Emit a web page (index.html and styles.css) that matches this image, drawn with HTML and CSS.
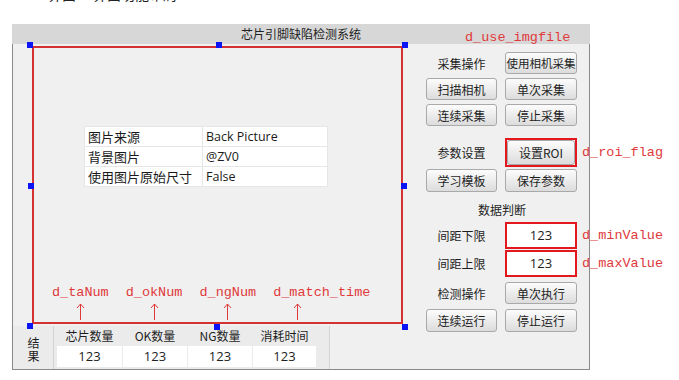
FILE: index.html
```html
<!DOCTYPE html>
<html lang="zh-CN">
<head>
    <meta charset="UTF-8">
    <title>芯片引脚缺陷检测系统</title>
    <link rel="stylesheet" href="styles.css">
</head>
<body>
    <div class="cut"><div class="cut-inner"><span>界面</span><span>界面功能布局</span></div></div>

    <div class="window">
        <div class="titlebar">芯片引脚缺陷检测系统</div>
        <span class="note note-top">d_use_imgfile</span>

        <div class="body">
            <!-- picture area -->
            <div class="canvas">
                <div class="roi">
                    <i class="handle h-tl"></i>
                    <i class="handle h-tm"></i>
                    <i class="handle h-tr"></i>
                    <i class="handle h-ml"></i>
                    <i class="handle h-mr"></i>
                    <i class="handle h-bl"></i>
                    <i class="handle h-bm"></i>
                    <i class="handle h-br"></i>

                    <table class="props">
                        <tr><td>图片来源</td><td>Back Picture</td></tr>
                        <tr><td>背景图片</td><td>@ZV0</td></tr>
                        <tr><td>使用图片原始尺寸</td><td>False</td></tr>
                    </table>

                    <div class="notes">
                        <div class="tag">
                            <span class="note">d_taNum</span>
                            <svg width="9" height="17" viewBox="0 0 9 17"><path d="M4.5 1V17M1 5L4.5 1L8 5"/></svg>
                        </div>
                        <div class="tag">
                            <span class="note">d_okNum</span>
                            <svg width="9" height="17" viewBox="0 0 9 17"><path d="M4.5 1V17M1 5L4.5 1L8 5"/></svg>
                        </div>
                        <div class="tag">
                            <span class="note">d_ngNum</span>
                            <svg width="9" height="17" viewBox="0 0 9 17"><path d="M4.5 1V17M1 5L4.5 1L8 5"/></svg>
                        </div>
                        <div class="tag">
                            <span class="note">d_match_time</span>
                            <svg class="shift" width="9" height="17" viewBox="0 0 9 17"><path d="M4.5 1V17M1 5L4.5 1L8 5"/></svg>
                        </div>
                    </div>
                </div>
            </div>

            <!-- control panel -->
            <div class="panel">
                <div class="row r1">
                    <span class="label">采集操作</span>
                    <button class="btn">使用相机采集</button>
                </div>
                <div class="row r2">
                    <button class="btn">扫描相机</button>
                    <button class="btn">单次采集</button>
                </div>
                <div class="row r3">
                    <button class="btn">连续采集</button>
                    <button class="btn">停止采集</button>
                </div>
                <div class="row r4">
                    <span class="label">参数设置</span>
                    <div class="frame"><button class="btn tall">设置ROI</button></div>
                    <span class="note">d_roi_flag</span>
                </div>
                <div class="row r5">
                    <button class="btn">学习模板</button>
                    <button class="btn">保存参数</button>
                </div>
                <div class="section">数据判断</div>
                <div class="row r6">
                    <span class="label">间距下限</span>
                    <div class="frame field">123</div>
                    <span class="note">d_minValue</span>
                </div>
                <div class="row r7">
                    <span class="label">间距上限</span>
                    <div class="frame field">123</div>
                    <span class="note">d_maxValue</span>
                </div>
                <div class="row r8">
                    <span class="label">检测操作</span>
                    <button class="btn">单次执行</button>
                </div>
                <div class="row r9">
                    <button class="btn">连续运行</button>
                    <button class="btn">停止运行</button>
                </div>
            </div>

            <!-- results -->
            <div class="results">
                <div class="res-title"><span>结果</span></div>
                <div class="res-grid">
                    <span class="res-head">芯片数量</span>
                    <span class="res-head">OK数量</span>
                    <span class="res-head">NG数量</span>
                    <span class="res-head">消耗时间</span>
                    <span class="res-val">123</span>
                    <span class="res-val">123</span>
                    <span class="res-val">123</span>
                    <span class="res-val">123</span>
                </div>
            </div>
        </div>
    </div>
</body>
</html>
```

FILE: styles.css
```css
* {
    margin: 0;
    padding: 0;
    box-sizing: border-box;
}

body {
    background: #fff;
    font-family: "Noto Sans CJK SC", "Noto Sans", sans-serif;
    font-size: 12px;
    color: #1e1e1e;
}

/* heading of the article, cut by the top of the picture */
.cut {
    height: 2px;
    overflow: hidden;
}

.cut-inner {
    display: flex;
    gap: 17px;
    padding-left: 48px;
    font-size: 14px;
    line-height: 14px;
    color: #222;
    transform: translateY(-13px);
}

.window {
    position: relative;
    width: 578px;
    margin: 22px 0 0 12px;
    background: #f0f0f0;
}

.titlebar {
    height: 20px;
    line-height: 20px;
    background: #d7d7d7;
    text-align: center;
    font-size: 12px;
    color: #222;
}

.note {
    font-family: "Liberation Mono", "DejaVu Sans Mono", monospace;
    font-size: 13.5px;
    line-height: 16px;
    color: #e0393b;
    white-space: nowrap;
}

.note-top {
    position: absolute;
    left: 453px;
    top: 6px;
}

.body {
    display: grid;
    grid-template-columns: 407px 169px;
    grid-template-rows: 282px 43px;
    border: 1px solid #8a8a8a;
    border-top: none;
}

/* picture area */
.canvas {
    grid-column: 1;
    grid-row: 1;
    padding: 2px 0 0 19px;
}

.roi {
    position: relative;
    width: 371px;
    height: 278px;
    border: 2px solid #d63132;
    display: flex;
    flex-direction: column;
}

.handle {
    position: absolute;
    width: 6px;
    height: 6px;
    background: #0a14f5;
}

.h-tl { left: -7px; top: -6px; }
.h-tm { left: 182px; top: -6px; }
.h-tr { left: 368px; top: -6px; }
.h-ml { left: -6px; top: 135px; }
.h-mr { left: 367px; top: 135px; }
.h-bl { left: -7px; top: 275px; }
.h-bm { left: 180px; top: 276px; }
.h-br { left: 368px; top: 276px; }

.props {
    margin: 78px 0 0 50px;
    width: 244px;
    border-collapse: collapse;
    background: #fff;
    font-size: 13px;
    color: #1a1a1a;
}

.props td {
    height: 20px;
    padding: 0 3px;
    line-height: 18px;
    border: 1px solid #e6e6e6;
}

.props td:first-child {
    width: 118px;
}

.props td:last-child {
    font-family: "Open Sans", "Noto Sans", sans-serif;
    font-size: 12.5px;
}

.notes {
    margin-top: auto;
    display: flex;
    gap: 17px;
    padding: 0 0 2px 18px;
}

.tag {
    display: flex;
    flex-direction: column;
    align-items: center;
}

.tag svg {
    margin-top: 2px;
    fill: none;
    stroke: #e0393b;
    stroke-width: 1;
}

.tag svg.shift {
    margin-right: 48px;
}

/* control panel */
.panel {
    grid-column: 2;
    grid-row: 1 / 3;
    display: flex;
    flex-direction: column;
    padding: 8px 0 0 6px;
}

.row {
    display: grid;
    grid-template-columns: 71px 72px auto;
    column-gap: 8px;
    align-items: center;
}

.r2, .r3 { margin-top: 4px; }
.r4 { margin-top: 12px; }
.r5 { margin-top: 2px; }
.r6 { margin-top: 2px; }
.r7 { margin-top: 1px; }
.r8 { margin-top: 5px; }
.r9 { margin-top: 5px; }

.row .note {
    margin-left: -3px;
}

.label {
    text-align: center;
    font-size: 12px;
}

.btn {
    height: 22px;
    padding: 0;
    border: 1px solid #a9a9a9;
    border-radius: 3px;
    background: linear-gradient(#fcfcfc, #dcdcdc);
    font-family: inherit;
    font-size: 12px;
    color: #1e1e1e;
    white-space: nowrap;
    display: flex;
    align-items: center;
    justify-content: center;
}

.r1 .btn {
    font-size: 11.5px;
}

.r5 .btn, .r9 .btn {
    height: 23px;
}

.frame {
    border: 2px solid #e3181e;
}

.frame .btn {
    width: 100%;
    height: 25px;
}

.field {
    height: 27px;
    background: #fff;
    text-align: center;
    line-height: 23px;
    font-family: "Open Sans", "Noto Sans", sans-serif;
    font-size: 13px;
}

.section {
    margin: 10px 0 2px 52px;
    line-height: 16px;
    font-size: 12px;
}

/* results */
.results {
    grid-column: 1;
    grid-row: 2;
    width: 317px;
    display: flex;
    background: #ebebeb;
    border-right: 1px solid #d3d3d3;
}

.res-title {
    width: 41px;
    padding-top: 11px;
    display: flex;
    justify-content: center;
    border-right: 1px solid #d3d3d3;
}

.res-title span {
    writing-mode: vertical-rl;
    letter-spacing: 1px;
    line-height: 14px;
    height: 26px;
}

.res-grid {
    display: grid;
    grid-template-columns: 65px 64px 64px 63px;
    column-gap: 1px;
    padding: 3px 0 0 3px;
}

.res-head {
    line-height: 14px;
    text-align: center;
}

.res-val {
    height: 21px;
    line-height: 21px;
    background: #fff;
    text-align: center;
    font-family: "Open Sans", "Noto Sans", sans-serif;
    font-size: 13px;
}
```
